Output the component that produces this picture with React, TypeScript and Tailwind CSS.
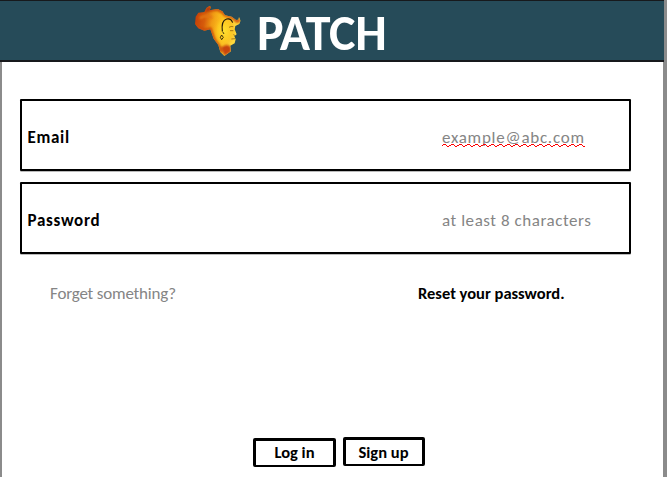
import React from "react";

function Logo() {
  return (
    <svg width="48" height="54" viewBox="27 12 144 162" aria-label="Patch logo">
      <defs>
        <linearGradient id="land" x1="0" y1="0.1" x2="1" y2="0.3">
          <stop offset="0" stopColor="#c03806" />
          <stop offset="0.25" stopColor="#d65c0c" />
          <stop offset="0.4" stopColor="#f09a14" />
          <stop offset="0.6" stopColor="#fcc41e" />
          <stop offset="0.85" stopColor="#fdd83c" />
        </linearGradient>
        <radialGradient id="glow">
          <stop offset="0" stopColor="#ffe030" />
          <stop offset="0.6" stopColor="#fdc820" stopOpacity="0.85" />
          <stop offset="1" stopColor="#f8a414" stopOpacity="0" />
        </radialGradient>
        <filter id="soft" x="-20%" y="-20%" width="140%" height="140%">
          <feGaussianBlur stdDeviation="2.5" />
        </filter>
        <clipPath id="shape">
          <path d="M32 50 L40 38 L58 36 L64 24 L74 17 L78 21 L74 31 L98 27 L112 34 L120 46 L140 50 L153 60 L160 59 L162 51 L167 62 L163 72 L151 78 L149 88 L155 103 L148 109 L152 118 L149 130 L136 137 L138 154 L118 168 L106 156 L100 135 L86 116 L76 88 L58 92 L40 85 L30 72 Z" />
        </clipPath>
      </defs>
      <g clipPath="url(#shape)">
        <rect x="27" y="12" width="144" height="162" fill="url(#land)" />
        <g filter="url(#soft)">
          <path d="M30 74 L42 84 L58 90 L76 86 L88 116 L102 136 L108 158" fill="none" stroke="#cc4c08" strokeWidth="8" />
          <path d="M74 31 L98 28 L114 37 L121 48 L142 52 L156 64 L166 60" fill="none" stroke="#cf5008" strokeWidth="9" />
          <path d="M108 142 L124 133 L138 140 L138 156 L118 168 Z" fill="#c84408" />
          <path d="M58 36 L66 22 L78 18 L76 34 Z" fill="#b33a08" />
          <path d="M44 55 Q62 42 82 54" fill="none" stroke="#e47712" strokeWidth="8" />
        </g>
        <ellipse cx="118" cy="92" rx="34" ry="50" fill="url(#glow)" />
      </g>
      <path d="M112 94 Q108 62 125 57 Q138 54 143 68" fill="none" stroke="#211708" strokeWidth="3.5" />
      <path d="M113 95 L117 102 M110 105 L106 112 L110 119 L115 112 Z" fill="none" stroke="#211708" strokeWidth="2.5" />
      <path d="M132 82 Q138 78 145 80 M135 92 L145 92 M139 117 L151 116 M145 104 L151 107" fill="none" stroke="#7a4a08" strokeWidth="2" />
    </svg>
  );
}

function Squiggle() {
  return (
    <svg className="absolute left-0 top-[15px]" width="143" height="5" shapeRendering="crispEdges">
      <defs>
        <pattern id="wave" width="8" height="5" patternUnits="userSpaceOnUse">
          <path d="M0 2h1v1H0zM1 1h3v1H1zM4 2h1v1H4zM5 3h2v1H5zM7 2h1v1H7z" fill="#f00" />
        </pattern>
      </defs>
      <rect width="143" height="5" fill="url(#wave)" />
    </svg>
  );
}

function Field({ label, children }: { label: string; children: React.ReactNode }) {
  return (
    <div className="flex h-[72px] w-[611px] items-center rounded-[1px] border-2 border-black pl-[5px] pt-[5px] shadow-[0_0.5px_0_#777]">
      <span className="w-[415px] pl-[0.5px] text-[17px] font-bold leading-5 tracking-[0.7px]">{label}</span>
      {children}
    </div>
  );
}

export default function App() {
  return (
    <div className="flex h-[477px] w-[667px] flex-col overflow-hidden bg-white font-['Carlito','Lato',sans-serif] text-black">
      <div className="flex h-[62px] w-[667px] bg-[#8b8b8b]">
        <header className="flex w-[664px] items-start border-b-2 border-t border-[#17191c] bg-[#264b59] pl-[194px] pt-[3px]">
          <Logo />
          <h1 className="ml-[15px] whitespace-nowrap text-[50px] font-bold leading-[58px] tracking-[-0.4px] text-white">PATCH</h1>
        </header>
      </div>
      <main className="flex h-[415px] w-[667px] flex-col border-l-2 border-r-[4px] border-[#8b8b8b] pl-[18px] pt-[37px]">
        <div className="flex flex-col gap-[11px]">
          <Field label="Email">
            <span className="relative whitespace-nowrap text-[17px] leading-5 tracking-[0.74px] text-[#858585]">
              example@abc.com
              <Squiggle />
            </span>
          </Field>
          <Field label="Password">
            <span className="whitespace-nowrap text-[17px] leading-5 tracking-[0.55px] text-[#858585]">at least 8 characters</span>
          </Field>
        </div>
        <div className="mt-[29px] flex h-5 items-center leading-5">
          <span className="w-[367px] pl-[30px] pt-[2px] text-[17px] tracking-[-0.18px] text-[#858585]">Forget something?</span>
          <span className="ml-[31px] whitespace-nowrap text-[16.5px] font-bold">Reset your password.</span>
        </div>
        <div className="ml-[233px] mt-[134px] flex gap-[7px]">
          <button className="mt-px h-[29px] w-[83px] rounded-[2px] border-[3px] border-b-2 border-black pb-[2px] text-[16.5px] font-bold leading-5">Log in</button>
          <button className="h-[29px] w-[82px] rounded-[2px] border-[3px] border-b-2 border-black pr-px text-[16.5px] font-bold leading-5">Sign up</button>
        </div>
      </main>
    </div>
  );
}
